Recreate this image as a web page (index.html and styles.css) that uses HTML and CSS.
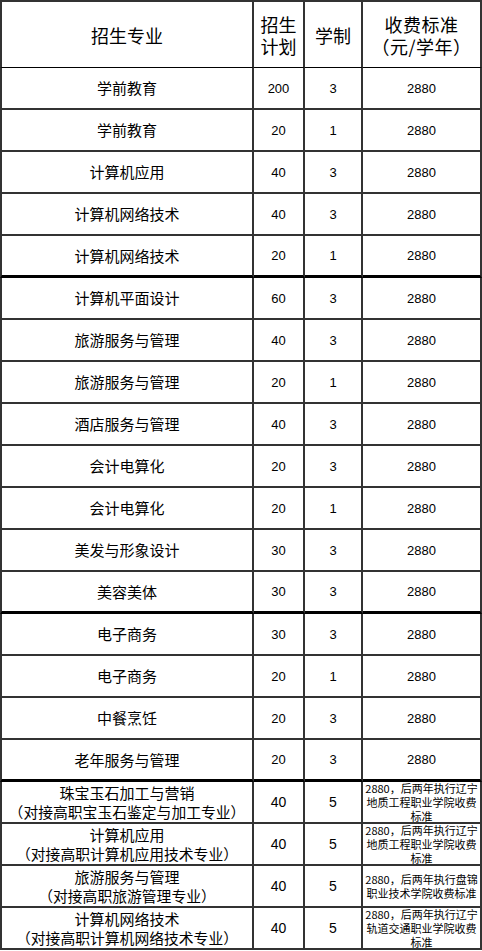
FILE: index.html
```html
<!DOCTYPE html>
<html lang="zh-CN">
<head>
<meta charset="utf-8">
<title>招生计划</title>
<link rel="stylesheet" href="styles.css">
</head>
<body>
<div class="sheet">
  <div class="row head">
    <div class="cell c1">招生专业</div>
    <div class="cell">招生<br>计划</div>
    <div class="cell">学制</div>
    <div class="cell">收费标准<br>（元/学年）</div>
  </div>
  <div class="row"><div class="cell c1 name">学前教育</div><div class="cell num">200</div><div class="cell num">3</div><div class="cell num">2880</div></div>
  <div class="row"><div class="cell c1 name">学前教育</div><div class="cell num">20</div><div class="cell num">1</div><div class="cell num">2880</div></div>
  <div class="row"><div class="cell c1 name">计算机应用</div><div class="cell num">40</div><div class="cell num">3</div><div class="cell num">2880</div></div>
  <div class="row"><div class="cell c1 name">计算机网络技术</div><div class="cell num">40</div><div class="cell num">3</div><div class="cell num">2880</div></div>
  <div class="row thick"><div class="cell c1 name">计算机网络技术</div><div class="cell num">20</div><div class="cell num">1</div><div class="cell num">2880</div></div>
  <div class="row"><div class="cell c1 name">计算机平面设计</div><div class="cell num">60</div><div class="cell num">3</div><div class="cell num">2880</div></div>
  <div class="row"><div class="cell c1 name">旅游服务与管理</div><div class="cell num">40</div><div class="cell num">3</div><div class="cell num">2880</div></div>
  <div class="row"><div class="cell c1 name">旅游服务与管理</div><div class="cell num">20</div><div class="cell num">1</div><div class="cell num">2880</div></div>
  <div class="row"><div class="cell c1 name">酒店服务与管理</div><div class="cell num">40</div><div class="cell num">3</div><div class="cell num">2880</div></div>
  <div class="row"><div class="cell c1 name">会计电算化</div><div class="cell num">20</div><div class="cell num">3</div><div class="cell num">2880</div></div>
  <div class="row"><div class="cell c1 name">会计电算化</div><div class="cell num">20</div><div class="cell num">1</div><div class="cell num">2880</div></div>
  <div class="row"><div class="cell c1 name">美发与形象设计</div><div class="cell num">30</div><div class="cell num">3</div><div class="cell num">2880</div></div>
  <div class="row thick"><div class="cell c1 name">美容美体</div><div class="cell num">30</div><div class="cell num">3</div><div class="cell num">2880</div></div>
  <div class="row"><div class="cell c1 name">电子商务</div><div class="cell num">30</div><div class="cell num">3</div><div class="cell num">2880</div></div>
  <div class="row"><div class="cell c1 name">电子商务</div><div class="cell num">20</div><div class="cell num">1</div><div class="cell num">2880</div></div>
  <div class="row"><div class="cell c1 name">中餐烹饪</div><div class="cell num">20</div><div class="cell num">3</div><div class="cell num">2880</div></div>
  <div class="row thick"><div class="cell c1 name">老年服务与管理</div><div class="cell num">20</div><div class="cell num">3</div><div class="cell num">2880</div></div>
  <div class="row"><div class="cell c1 name two"><div>珠宝玉石加工与营销<br><span class="sub">（对接高职宝玉石鉴定与加工专业）</span></div></div><div class="cell num big">40</div><div class="cell num big">5</div><div class="cell note"><div>2880，后两年执行辽宁<br>地质工程职业学院收费<br>标准</div></div></div>
  <div class="row"><div class="cell c1 name two"><div>计算机应用<br><span class="sub">（对接高职计算机应用技术专业）</span></div></div><div class="cell num big">40</div><div class="cell num big">5</div><div class="cell note"><div>2880，后两年执行辽宁<br>地质工程职业学院收费<br>标准</div></div></div>
  <div class="row"><div class="cell c1 name two"><div>旅游服务与管理<br><span class="sub">（对接高职旅游管理专业）</span></div></div><div class="cell num big">40</div><div class="cell num big">5</div><div class="cell note"><div>2880，后两年执行盘锦<br>职业技术学院收费标准</div></div></div>
  <div class="row"><div class="cell c1 name two"><div>计算机网络技术<br><span class="sub">（对接高职计算机网络技术专业）</span></div></div><div class="cell num big">40</div><div class="cell num big">5</div><div class="cell note"><div>2880，后两年执行辽宁<br>轨道交通职业学院收费<br>标准</div></div></div>
</div>
</body>
</html>
```

FILE: styles.css
```css
html, body {
  margin: 0;
  padding: 0;
  background: #fff;
}

.sheet {
  display: grid;
  grid-template-columns: 254px 51px 58px 119px;
  grid-template-rows: 68px;
  grid-auto-rows: 42px;
  width: 482px;
  font-family: "Noto Sans CJK SC", "Noto Sans", sans-serif;
  color: #000;
  text-spacing-trim: space-all;
  font-feature-settings: "chws" 0, "halt" 0, "palt" 0;
}

.row {
  display: contents;
}

.cell {
  box-sizing: border-box;
  border-right: 2px solid #333;
  border-bottom: 2px solid #333;
  display: flex;
  align-items: center;
  justify-content: center;
  text-align: center;
  min-width: 0;
}

.c1 {
  border-left: 2px solid #333;
}

.head .cell {
  border-top: 2px solid #333;
  border-bottom: 1px solid #000;
  font-size: 18px;
  line-height: 22px;
}

.head .cell:last-child {
  letter-spacing: 0.5px;
}

.thick .cell {
  border-bottom: 3px solid #000;
}

.name {
  font-size: 15px;
  line-height: 20px;
}

.two {
  line-height: 19px;
  white-space: nowrap;
}

.sub {
  font-size: 14.8px;
}

.num {
  font-family: "Liberation Sans", Arial, sans-serif;
  font-size: 13px;
  font-feature-settings: normal;
}

.num.big {
  font-size: 14px;
}

.note {
  font-size: 11px;
  line-height: 14px;
  white-space: nowrap;
}
```
